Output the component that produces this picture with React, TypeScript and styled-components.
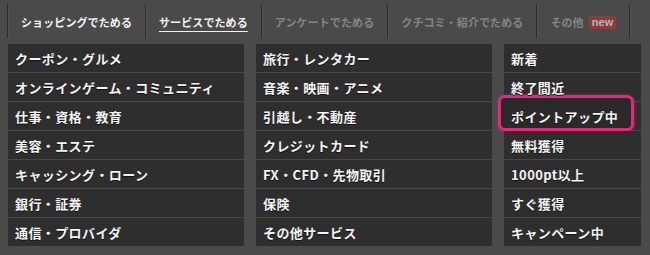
import React from "react";
import styled, { createGlobalStyle } from "styled-components";

const Global = createGlobalStyle`
  html, body { margin: 0; padding: 0; background: #4a4a4a; }
  body { font-family: "Noto Sans CJK JP", "Noto Sans", sans-serif; }
`;

const Wrap = styled.div`
  width: 650px;
  height: 255px;
  background: #4a4a4a;
  box-sizing: border-box;
  padding: 0 9px 0 8px;
  display: flex;
  flex-direction: column;
`;

const TabBar = styled.div`
  display: flex;
  align-items: center;
  height: 44px;
  margin-left: -1px;
`;

const Sep = styled.div`
  width: 1px;
  height: 34px;
  margin-top: -2px;
  background: #2c2c2c;
  box-shadow: 1px 0 0 #525252;
`;

const Tab = styled.div<{ $state: "on" | "active" | "off" }>`
  padding: 0 13px;
  height: 44px;
  display: flex;
  align-items: center;
  font-size: 11px;
  font-weight: 700;
  letter-spacing: 0.1px;
  white-space: nowrap;
  color: ${(p) => (p.$state === "off" ? "#858585" : "#f2f2f2")};
  text-decoration: ${(p) => (p.$state === "active" ? "underline" : "none")};
  text-underline-offset: 4px;
  text-decoration-thickness: 1px;
`;

const Badge = styled.span`
  margin-left: 5px;
  background: #8e3b3b;
  color: #b8b8b8;
  font-family: "Liberation Sans", Arial, sans-serif;
  font-size: 11px;
  font-weight: 700;
  padding: 0 3px;
  height: 13px;
  line-height: 12px;
  border-radius: 2px;
`;

const Grid = styled.div`
  display: grid;
  grid-template-columns: 236px 236px 137px;
  column-gap: 12px;
`;

const Column = styled.div`
  display: flex;
  flex-direction: column;
  gap: 1px;
  background: #484848;
`;

const Item = styled.div`
  position: relative;
  height: 28px;
  background: #2e2e2e;
  color: #f4f4f4;
  font-size: 13px;
  font-weight: 700;
  letter-spacing: 0.4px;
  display: flex;
  align-items: center;
  padding-left: 7px;
  white-space: nowrap;
  text-shadow: 0 1px 0 #111;
`;

const Label = styled.span`
  position: relative;
  z-index: 1;
`;

const Highlight = styled.div`
  position: absolute;
  left: -6px;
  top: -7px;
  right: 7px;
  bottom: -1px;
  border: 3px solid #e4287c;
  border-radius: 7px;
  background: #2a2a2a;
  box-shadow: 0 0 3px rgba(228, 40, 124, 0.7);
`;

const col1 = [
  "クーポン・グルメ",
  "オンラインゲーム・コミュニティ",
  "仕事・資格・教育",
  "美容・エステ",
  "キャッシング・ローン",
  "銀行・証券",
  "通信・プロバイダ",
];
const col2 = [
  "旅行・レンタカー",
  "音楽・映画・アニメ",
  "引越し・不動産",
  "クレジットカード",
  "FX・CFD・先物取引",
  "保険",
  "その他サービス",
];
const col3 = [
  "新着",
  "終了間近",
  "ポイントアップ中",
  "無料獲得",
  "1000pt以上",
  "すぐ獲得",
  "キャンペーン中",
];

export default function App() {
  return (
    <>
      <Global />
      <Wrap>
        <TabBar>
          <Sep />
          <Tab $state="on">ショッピングでためる</Tab>
          <Sep />
          <Tab $state="active">サービスでためる</Tab>
          <Sep />
          <Tab $state="off">アンケートでためる</Tab>
          <Sep />
          <Tab $state="off">クチコミ・紹介でためる</Tab>
          <Sep />
          <Tab $state="off">
            その他<Badge>new</Badge>
          </Tab>
          <Sep />
        </TabBar>
        <Grid>
          <Column>
            {col1.map((t) => (
              <Item key={t}>
                <Label>{t}</Label>
              </Item>
            ))}
          </Column>
          <Column>
            {col2.map((t) => (
              <Item key={t}>
                <Label>{t}</Label>
              </Item>
            ))}
          </Column>
          <Column>
            {col3.map((t) => (
              <Item key={t}>
                {t === "ポイントアップ中" && <Highlight />}
                <Label>{t}</Label>
              </Item>
            ))}
          </Column>
        </Grid>
      </Wrap>
    </>
  );
}
